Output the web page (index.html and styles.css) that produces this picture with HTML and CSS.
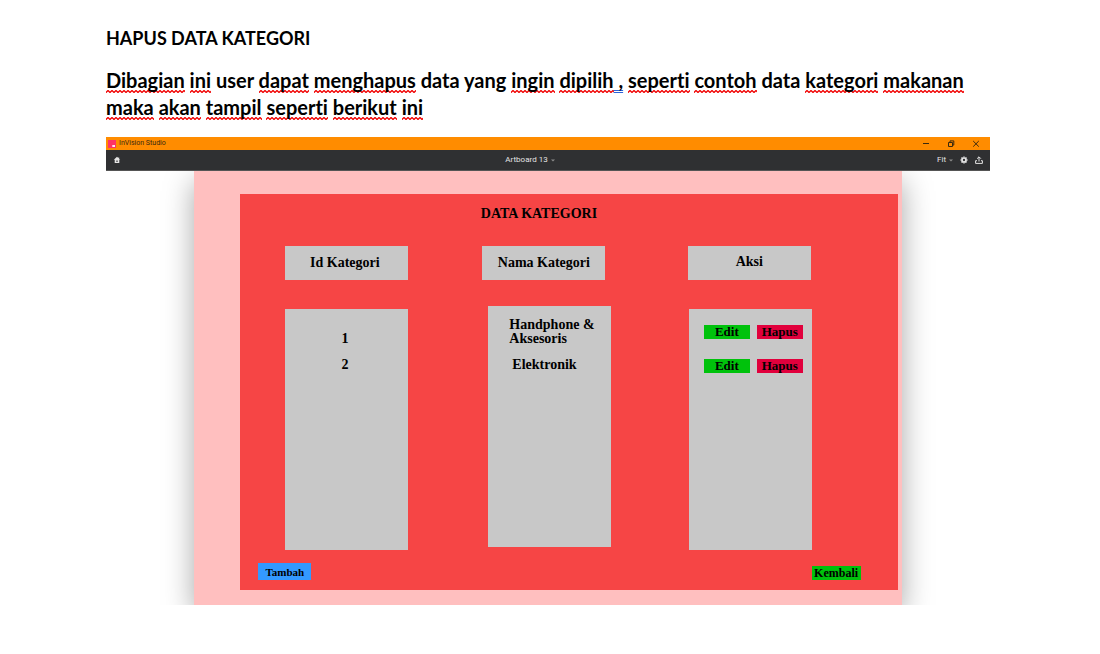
FILE: index.html
```html
<!DOCTYPE html>
<html lang="id">
<head>
<meta charset="utf-8">
<meta name="viewport" content="width=device-width, initial-scale=1">
<title>Hapus Data Kategori</title>
<link rel="stylesheet" href="styles.css">
</head>
<body>
<main class="document">
  <h1 class="heading">HAPUS DATA KATEGORI</h1>
  <p class="intro"><span class="spell">Dibagian</span> <span class="spell">ini</span> user <span class="spell">dapat</span> <span class="spell">menghapus</span> data yang <span class="spell">ingin</span> <span class="spell">dipilih</span><span class="grammar"> ,</span> <span class="spell">seperti</span> <span class="spell">contoh</span> data <span class="spell">kategori</span> <span class="spell">makanan</span> <span class="spell">maka</span> <span class="spell">akan</span> <span class="spell">tampil</span> <span class="spell">seperti</span> <span class="spell">berikut</span> <span class="spell">ini</span></p>

  <section class="window" aria-label="InVision Studio">
    <header class="titlebar">
      <svg class="logo" viewBox="0 0 8 8" aria-hidden="true"><rect width="8" height="8" fill="#ff3366"/><rect x="4" y="5" width="1" height="2" fill="#ffb0c4"/><rect x="5" y="5" width="2" height="2" fill="#ffe3ea"/></svg>
      <span class="app-name">InVision Studio</span>
      <div class="window-controls">
        <button class="icon-button" aria-label="Minimize"><svg viewBox="0 0 8 8"><path d="M1 3.5h6"/></svg></button>
        <button class="icon-button" aria-label="Restore"><svg viewBox="0 0 8 8"><path d="M1.5 2.5h4v4h-4zM3 2.3V.9h3.8v4.2H5.8"/></svg></button>
        <button class="icon-button" aria-label="Close"><svg viewBox="0 0 8 8"><path d="M1.2 1l5.6 5.6M6.8 1L1.2 6.6"/></svg></button>
      </div>
    </header>
    <nav class="toolbar" aria-label="Preview">
      <div class="tools"><button class="icon-button" aria-label="Home"><svg viewBox="0 0 8 8"><path class="solid" fill-rule="evenodd" d="M4 .8L.8 3.8h.9v3.1h4.6V3.8h.9L6.2 2.9V1.5h-.9v.6zM3.4 5.9V4.5h1.2v1.4z"/></svg></button></div>
      <button class="menu-button artboard-menu">Artboard 13 <svg class="caret" viewBox="0 0 4 3" aria-hidden="true"><path d="M0 .5h4L2 2.5z"/></svg></button>
      <div class="tools tools-end">
        <button class="menu-button">Fit <svg class="caret" viewBox="0 0 4 3" aria-hidden="true"><path d="M0 .5h4L2 2.5z"/></svg></button>
        <button class="icon-button" aria-label="Settings"><svg viewBox="0 0 8 8"><circle cx="4" cy="4" r="2" stroke-width="1.7"/><path stroke-width="1.4" d="M4 .5v1M4 6.5v1M.5 4h1M6.5 4h1M1.5 1.5l.8.8M5.7 5.7l.8.8M6.5 1.5l-.8.8M2.3 5.7l-.8.8"/></svg></button>
        <button class="icon-button" aria-label="Share"><svg viewBox="0 0 8 8"><path d="M4 5.5V1M2.1 2.7L4 .8l1.9 1.9M2 4.7H.6v2.7h6.8V4.7H6"/></svg></button>
      </div>
    </nav>
    <div class="canvas">
      <div class="artboard">
        <div class="panel">
          <h2 class="panel-title">DATA KATEGORI</h2>
          <table class="categories">
            <thead>
              <tr>
                <th scope="col"><div class="box box-id">Id Kategori</div></th>
                <th scope="col"><div class="box">Nama Kategori</div></th>
                <th scope="col"><div class="box box-action">Aksi</div></th>
              </tr>
            </thead>
            <tbody>
              <tr class="first">
                <td><div class="box id">1</div></td>
                <td><div class="box name">Handphone &amp;<br>Aksesoris</div></td>
                <td><div class="box actions"><button class="edit">Edit</button><button class="delete">Hapus</button></div></td>
              </tr>
              <tr class="last">
                <td><div class="box id">2</div></td>
                <td><div class="box name">Elektronik</div></td>
                <td><div class="box actions"><button class="edit">Edit</button><button class="delete">Hapus</button></div></td>
              </tr>
            </tbody>
          </table>
          <footer class="panel-footer">
            <button class="add">Tambah</button>
            <button class="back">Kembali</button>
          </footer>
        </div>
      </div>
    </div>
  </section>
</main>
</body>
</html>
```
FILE: styles.css
```css
* {
  box-sizing: border-box;
}

body {
  margin: 0;
  background: #fff;
  color: #000;
}

button {
  margin: 0;
  padding: 0;
  border: 0;
  background: none;
  color: inherit;
  font: inherit;
}

.document {
  padding: 25px 110px 48px 106px;
  font-family: Lato, "Open Sans", sans-serif;
  font-variant-ligatures: none;
}

.heading {
  margin: 0 0 15px;
  font-size: 18px;
  font-weight: 700;
  line-height: 27px;
}

.intro {
  margin: 0 0 16px;
  font-size: 20px;
  font-weight: 700;
  line-height: 27px;
}

/* Spelling marks: a fine zigzag repeated under each word */
.spell {
  padding-bottom: 1px;
  background: url("data:image/svg+xml,%3Csvg xmlns='http://www.w3.org/2000/svg' width='4' height='3'%3E%3Cpath d='M-2 .5L0 2.5L2 .5L4 2.5L6 .5' fill='none' stroke='%23f00000' stroke-width='1.3'/%3E%3C/svg%3E") left bottom repeat-x;
}

.grammar {
  text-decoration: underline double #2b62d9 1px;
  text-decoration-skip-ink: none;
  text-underline-offset: 2px;
}

/* Application window */
.titlebar {
  display: flex;
  align-items: center;
  gap: 3px;
  height: 13px;
  padding: 0 10px 0 2px;
  background: #ff8c00;
  color: #3a2a10;
  font: 7px/13px Roboto, sans-serif;
}

.logo {
  width: 8px;
  height: 8px;
}

.window-controls {
  display: flex;
  gap: 17px;
  margin-left: auto;
}

.icon-button {
  display: block;
  width: 8px;
  height: 8px;
}

.icon-button svg {
  display: block;
  width: 8px;
  height: 8px;
  fill: none;
  stroke: currentColor;
}

.icon-button .solid {
  fill: currentColor;
  stroke: none;
}

.toolbar {
  display: grid;
  grid-template-columns: 1fr auto 1fr;
  align-items: center;
  height: 21px;
  padding: 0 7px;
  border-bottom: 1px solid #555;
  background: #2f3032;
  color: #e4e4e4;
  font: 8px/20px Roboto, sans-serif;
}

.tools {
  display: flex;
  align-items: center;
  gap: 7px;
}

.tools-end {
  justify-content: flex-end;
}

.menu-button {
  display: flex;
  align-items: center;
  gap: 3px;
}

.artboard-menu {
  padding-right: 36px;
}

.caret {
  width: 4px;
  height: 3px;
  fill: #8c8c8c;
}

/* Preview canvas */
.canvas {
  overflow: hidden;
  padding: 0 10%;
}

.artboard {
  padding: 23px 4px 15px 46px;
  background: #ffbfbf;
  box-shadow: 0 10px 28px rgba(0, 0, 0, 0.35);
  font-family: "Liberation Serif", serif;
  font-weight: 700;
}

.panel {
  padding: 12px 0 10px;
  background: #f64545;
}

.panel-title {
  margin: 0 60px 24px 0;
  font-size: 14px;
  line-height: 16px;
  text-align: center;
}

.categories {
  width: 81%;
  margin-left: 45px;
  border-collapse: collapse;
  table-layout: fixed;
  font-size: 14px;
  line-height: 14px;
}

.categories th,
.categories td {
  padding: 0;
}

.categories th:nth-child(1) {
  width: 37%;
}

.categories th:nth-child(2) {
  width: 38.6%;
}

.categories th {
  padding-bottom: 26px;
}

.box {
  width: 123px;
  background: #c8c8c8;
}

th .box {
  height: 34px;
  padding: 10px 0;
}

th .box-id {
  padding-right: 4px;
}

th .box-action {
  padding: 9px 0 11px;
}

.first td {
  vertical-align: bottom;
}

.last td {
  vertical-align: top;
}

.box.id {
  padding-right: 4px;
  text-align: center;
}

.box.name {
  margin-left: 6px;
  padding-left: 21px;
}

.box.actions {
  display: flex;
  gap: 7px;
  margin-left: 1px;
  padding-left: 15px;
}

.first .box {
  height: 43px;
  padding-top: 23px;
}

.first .box.name {
  height: 46px;
  padding-top: 12px;
}

.first .box.actions {
  padding-top: 16px;
}

.last .box {
  height: 198px;
  padding-top: 6px;
}

.last .box.name {
  height: 195px;
  padding-left: 24px;
}

.last .box.actions {
  padding-top: 7px;
}

.actions button {
  width: 46px;
  height: 14px;
  font-size: 13px;
  line-height: 14px;
}

.actions .edit,
.back {
  background: #00c20c;
}

.actions .delete {
  background: #e1003c;
}

.panel-footer {
  display: flex;
  align-items: flex-end;
  justify-content: space-between;
  padding: 13px 37px 0 18px;
  line-height: 14px;
}

.add {
  width: 53px;
  height: 17px;
  background: #3399ff;
  font-size: 11px;
}

.back {
  width: 49px;
  height: 14px;
  font-size: 12px;
}
```
